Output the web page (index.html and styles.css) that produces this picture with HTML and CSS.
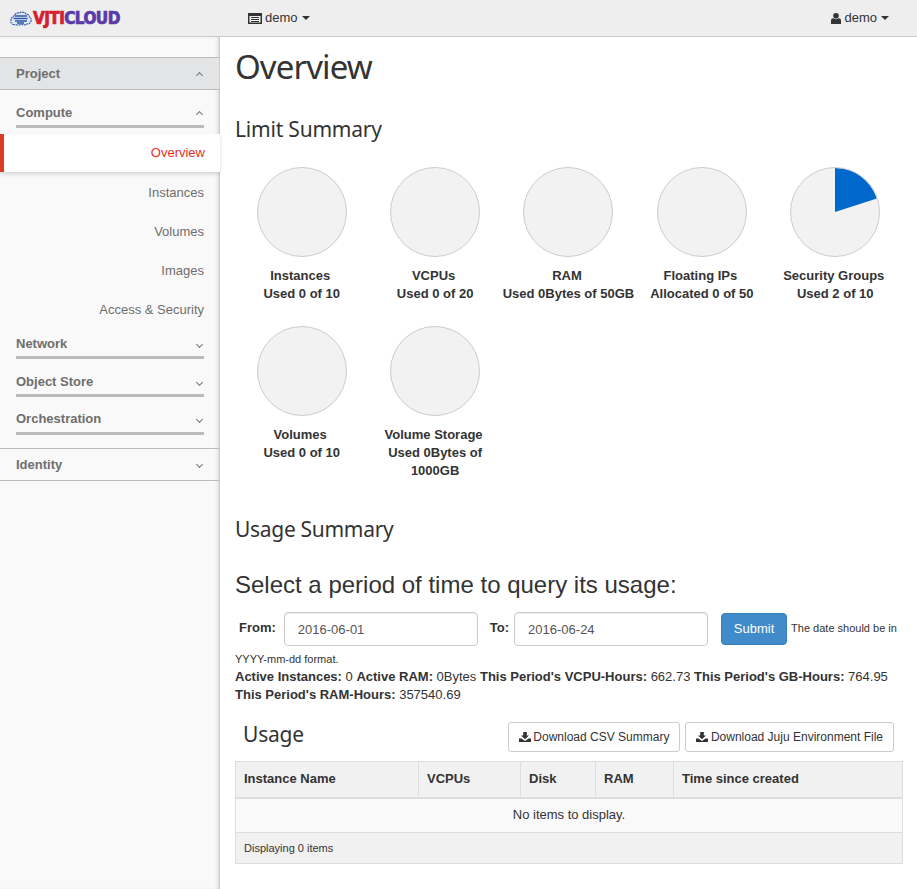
FILE: index.html
```html
<!DOCTYPE html>
<html lang="en">
<head>
  <meta charset="UTF-8" />
  <title>Instance Overview</title>
  <link rel="stylesheet" href="styles.css">
</head>
<body>

<nav class="topbar">
  <div class="brand">
    <svg class="brand-cloud" width="22" height="15" viewBox="0 0 22 15">
      <path d="M4 13.500C1.500 13.500.500 11.500 1 9.500.500 7.500 2 6 3.500 5.500 4.500 3 7 1.500 9.500 2c2-1.500 5-1 6.500 1 2 0 3.500 1.500 3.500 3 1.500.8 2 2.500 1.500 4-.5 2-2 3-4 3-1.500 1.200-4 1-5.500.3-2 .9-5.500.9-7.500.2z" fill="#dfe8f5" stroke="#3a62b0" stroke-width="1.200" stroke-dasharray="2 .6"/>
      <path d="M5 5h12M3.500 7.500h14M5 10h12M7 12h7" stroke="#2f57a8" stroke-width="1.500" fill="none"/>
    </svg>
    <span class="brand-text"><span class="brand-red">VJTI</span><span class="brand-purple">CLOUD</span></span>
  </div>
  <a class="top-menu project-menu">
    <svg width="14" height="11" viewBox="0 0 14 11"><path d="M0 0h14v11H0zM1.500 3v6.500h11V3zM3 4h8v1H3zM3 6h8v1H3zM3 8h8v1H3z" fill="#333" fill-rule="evenodd"/></svg>
    demo <span class="caret"></span>
  </a>
  <a class="top-menu user-menu">
    <svg width="10" height="11" viewBox="0 0 10 11"><circle cx="5" cy="2.800" r="2.800" fill="#333"/><path d="M0 11V7.500C0 6 1 5.200 2.500 5.200c1.500 1.300 3.500 1.300 5 0C9 5.200 10 6 10 7.500V11z" fill="#333"/></svg>
    demo <span class="caret"></span>
  </a>
</nav>

<div class="wrapper">
  <aside class="sidebar">
    <div class="dash-head open">Project <span class="chev up"></span></div>

    <div class="panel-head first">Compute <span class="chev up"></span></div>
    <ul class="side-links">
      <li class="active">Overview</li>
      <li>Instances</li>
      <li>Volumes</li>
      <li>Images</li>
      <li>Access &amp; Security</li>
    </ul>
    <div class="panel-head">Network <span class="chev"></span></div>
    <div class="panel-head">Object Store <span class="chev"></span></div>
    <div class="panel-head orchestration">Orchestration <span class="chev"></span></div>

    <div class="dash-head identity">Identity <span class="chev"></span></div>
  </aside>

  <main class="content">
    <h1>Overview</h1>

    <h2 class="limit-title">Limit Summary</h2>
    <div class="pies">
      <div class="pie-item">
        <div class="pie"></div>
        <strong class="pie-name">Instances</strong>
        <strong>Used 0 of 10</strong>
      </div>
      <div class="pie-item">
        <div class="pie"></div>
        <strong class="pie-name">VCPUs</strong>
        <strong>Used 0 of 20</strong>
      </div>
      <div class="pie-item">
        <div class="pie"></div>
        <strong class="pie-name">RAM</strong>
        <strong>Used 0Bytes of 50GB</strong>
      </div>
      <div class="pie-item">
        <div class="pie"></div>
        <strong class="pie-name">Floating IPs</strong>
        <strong>Allocated 0 of 50</strong>
      </div>
      <div class="pie-item">
        <div class="pie">
          <svg width="88" height="88" viewBox="0 0 88 88"><path d="M44 44V0A44 44 0 0 1 85.850 30.400Z" fill="#0068cc"/></svg>
        </div>
        <strong class="pie-name">Security Groups</strong>
        <strong>Used 2 of 10</strong>
      </div>
      <div class="pie-item">
        <div class="pie"></div>
        <strong class="pie-name">Volumes</strong>
        <strong>Used 0 of 10</strong>
      </div>
      <div class="pie-item">
        <div class="pie"></div>
        <strong class="pie-name">Volume Storage</strong>
        <strong>Used 0Bytes of 1000GB</strong>
      </div>
    </div>

    <h2 class="usage-title">Usage Summary</h2>
    <h3>Select a period of time to query its usage:</h3>

    <form class="period-form">
      <label class="from-label">From:</label>
      <input type="text" value="2016-06-01" />
      <label class="to-label">To:</label>
      <input type="text" value="2016-06-24" />
      <button type="button" class="btn-submit">Submit</button>
      <span class="date-help">The date should be in</span>
    </form>
    <p class="date-format">YYYY-mm-dd format.</p>
    <p class="stats">
      <strong>Active Instances:</strong> 0 <strong>Active RAM:</strong> 0Bytes <strong>This Period's VCPU-Hours:</strong> 662.73 <strong>This Period's GB-Hours:</strong> 764.95 <strong>This Period's RAM-Hours:</strong> 357540.69
    </p>

    <div class="table-bar">
      <h2>Usage</h2>
      <a class="btn-dl">
        <svg width="12" height="10" viewBox="0 0 12 10"><path d="M4.200 0h3.600v3.500h2.200L6 7.300 2 3.500h2.200zM0 6.500h2.500L6 9l3.500-2.500H12V10H0z" fill="#333"/></svg>
        Download CSV Summary
      </a>
      <a class="btn-dl">
        <svg width="12" height="10" viewBox="0 0 12 10"><path d="M4.200 0h3.600v3.500h2.200L6 7.300 2 3.500h2.200zM0 6.500h2.500L6 9l3.500-2.500H12V10H0z" fill="#333"/></svg>
        Download Juju Environment File
      </a>
    </div>

    <table class="usage-table">
      <thead>
        <tr>
          <th class="col-name">Instance Name</th>
          <th class="col-vcpu">VCPUs</th>
          <th class="col-disk">Disk</th>
          <th class="col-ram">RAM</th>
          <th>Time since created</th>
        </tr>
      </thead>
      <tbody>
        <tr><td colspan="5" class="empty">No items to display.</td></tr>
      </tbody>
      <tfoot>
        <tr><td colspan="5">Displaying 0 items</td></tr>
      </tfoot>
    </table>
  </main>
</div>

</body>
</html>
```

FILE: styles.css
```css
* {
  box-sizing: border-box;
}
html, body {
  margin: 0;
  height: 100%;
}
body {
  font-family: "Liberation Sans", Arial, sans-serif;
  font-size: 13px;
  line-height: 18px;
  color: #333;
  background: #fff;
  overflow: hidden;
}

/* top bar */
.topbar {
  height: 37px;
  display: flex;
  align-items: center;
  background: #eee;
  border-bottom: 1px solid #ccc;
  position: relative;
  z-index: 2;
}
.brand {
  width: 248px;
  padding-left: 10px;
  display: flex;
  align-items: center;
}
.brand-cloud {
  flex-shrink: 0;
}
.brand-text {
  font-family: "DejaVu Sans Condensed", "DejaVu Sans", sans-serif;
  font-stretch: condensed;
  font-weight: bold;
  font-size: 17px;
  letter-spacing: -0.6px;
  -webkit-text-stroke: 0.7px currentColor;
  white-space: nowrap;
  margin-left: 1px;
}
.brand-red {
  color: #d5202f;
}
.brand-purple {
  color: #5a3aa8;
}
.top-menu {
  display: flex;
  align-items: center;
  gap: 3px;
  color: #333;
}
.user-menu {
  margin-left: auto;
  margin-right: 28px;
}
.caret {
  display: inline-block;
  width: 0;
  height: 0;
  margin-left: 1px;
  border-top: 4px solid #333;
  border-left: 4px solid transparent;
  border-right: 4px solid transparent;
}

/* sidebar */
.wrapper {
  display: flex;
  height: 852px;
}
.sidebar {
  width: 220px;
  flex-shrink: 0;
  background: #f9f9f9;
  border-right: 1px solid #ccc;
  box-shadow: inset -3px 0 4px -2px rgba(0,0,0,0.15);
  padding-top: 20px;
}
.dash-head {
  height: 33px;
  padding: 0 15px 0 16px;
  display: flex;
  align-items: center;
  justify-content: space-between;
  font-weight: bold;
  color: #6e6e6e;
  border-top: 1px solid #bbb;
  border-bottom: 1px solid #bbb;
}
.dash-head.open {
  background: #e3e4e6;
}
.dash-head.identity {
  margin-top: 13px;
}
.panel-head {
  margin: 0 15px 0 16px;
  height: 38px;
  padding: 14px 0 3px;
  display: flex;
  align-items: center;
  justify-content: space-between;
  font-weight: bold;
  color: #6e6e6e;
  border-bottom: 3px solid #bbb;
}
.panel-head.first {
  margin-bottom: 6px;
}
.panel-head.orchestration {
  padding: 13px 0 4px;
}
.chev {
  width: 5px;
  height: 5px;
  margin-right: 2px;
  border-right: 1px solid #777;
  border-bottom: 1px solid #777;
  transform: rotate(45deg);
}
.chev.up {
  margin-top: 3px;
  transform: rotate(-135deg);
}
.side-links {
  list-style: none;
  margin: 0;
  padding: 0 0 2px;
  color: #6e6e6e;
}
.side-links li {
  padding: 12px 15px 9px;
  text-align: right;
}
.side-links li:last-child {
  padding-bottom: 0;
}
.side-links li.active {
  height: 38px;
  padding-top: 10px;
  margin-right: -1px;
  background: #fff;
  color: #e5301f;
  border-left: 4px solid #dc3d26;
  box-shadow: 0 2px 4px rgba(0,0,0,0.15);
  position: relative;
}

/* main */
.content {
  flex: 1;
  min-width: 0;
  padding: 0 14px 0 15px;
}
h1, h2 {
  font-family: "Noto Sans", "Open Sans", sans-serif;
  font-weight: 400;
  margin: 0;
  color: #333;
}
h1 {
  font-size: 33px;
  line-height: 36px;
  margin-top: 12px;
  letter-spacing: -0.9px;
}
h2 {
  font-size: 21px;
  line-height: 24px;
  letter-spacing: -0.2px;
}
.limit-title {
  margin-top: 32px;
}
.pies {
  display: flex;
  flex-wrap: wrap;
  margin-top: 26px;
  width: 667px;
}
.pie-item {
  width: 133.400px;
  height: 159px;
  display: flex;
  flex-direction: column;
  align-items: center;
  text-align: center;
}
.pie {
  width: 90px;
  height: 90px;
  margin-bottom: 10px;
  border: 1px solid #ccc;
  border-radius: 50%;
  background: #f2f2f2;
  overflow: hidden;
  flex-shrink: 0;
}
.pie svg {
  display: block;
}
.pie-name {
  padding-right: 3px;
}
.usage-title {
  margin-top: 32px;
  letter-spacing: -0.3px;
}
h3 {
  font-size: 24px;
  font-weight: 400;
  line-height: 26px;
  margin: 31px 0 0;
}
.period-form {
  display: flex;
  align-items: center;
  margin-top: 14px;
  height: 34px;
}
.period-form label {
  font-weight: bold;
}
.from-label {
  margin: -2px 8px 0 4px;
}
.to-label {
  margin: -2px 5px 0 12px;
}
.period-form input {
  width: 194px;
  height: 34px;
  padding: 6px 13px;
  border: 1px solid #ccc;
  border-radius: 4px;
  box-shadow: inset 0 1px 1px rgba(0,0,0,0.075);
  font: 13px "Liberation Sans", Arial, sans-serif;
  color: #555;
}
.btn-submit {
  width: 66px;
  height: 32px;
  margin: -1px 0 0 13px;
  background: #428bca;
  border: 1px solid #357ebd;
  border-radius: 4px;
  color: #fff;
  font: 13px "Liberation Sans", Arial, sans-serif;
}
.date-help {
  font-size: 11px;
  margin-left: 4px;
  margin-top: -2px;
}
.date-format {
  margin: 4px 0 0;
  font-size: 11px;
}
.stats {
  margin: 0;
  width: 667px;
}
.table-bar {
  display: flex;
  align-items: center;
  gap: 5px;
  margin-top: 18px;
  padding: 0 9px 0 8px;
  height: 30px;
}
.table-bar h2 {
  margin-right: auto;
  margin-bottom: 6px;
}
.btn-dl {
  display: flex;
  align-items: center;
  gap: 2.500px;
  height: 30px;
  padding: 0 10px;
  font-size: 12px;
  border: 1px solid #ccc;
  border-radius: 3px;
  background: #fff;
  white-space: nowrap;
}
.usage-table {
  width: 668px;
  margin-top: 9px;
  border-collapse: collapse;
  table-layout: fixed;
}
.usage-table th, .usage-table td {
  border: 1px solid #ddd;
  padding: 0 8px;
  text-align: left;
}
.usage-table th {
  height: 36px;
  background: #f1f1f1;
  border-bottom: 2px solid #ddd;
}
.col-name { width: 183px; }
.col-vcpu { width: 102px; }
.col-disk { width: 75px; }
.col-ram { width: 78px; }
.usage-table td.empty {
  height: 35px;
  text-align: center;
  background: #f9f9f9;
}
.usage-table tfoot td {
  height: 31px;
  font-size: 11px;
  background: #f1f1f1;
}
```
